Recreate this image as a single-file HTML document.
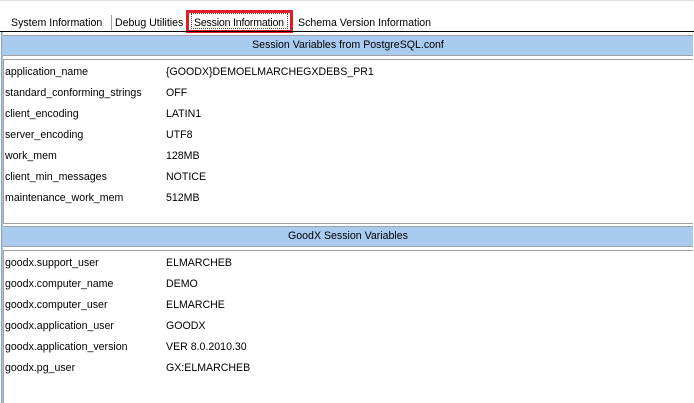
<!DOCTYPE html>
<html><head><style>
body{margin:0;width:694px;height:403px;background:#fff;position:relative;overflow:hidden;font-family:"Liberation Sans",Tahoma,sans-serif;font-size:10.6px;color:#000}
.a{position:absolute;white-space:nowrap}
.tab{top:17px}
.hdr{position:absolute;left:3px;width:690px;height:19px;background:#a9cbf0;border-top:1px solid #a0a0a0;border-bottom:1px solid #a0a0a0;text-align:center;line-height:19px}
.hl{position:absolute;left:3px;width:690px;height:1px;background:#a0a0a0}
</style></head><body>
<div class="a" style="left:0;top:0;width:694px;height:1px;background:#e0e0e0"></div>
<div class="a tab" style="left:11px">System Information</div>
<div class="a" style="left:111px;top:15px;width:1px;height:15px;background:#a0a0a0"></div>
<div class="a tab" style="left:115px">Debug Utilities</div>
<div class="a" style="left:186px;top:10px;width:107px;height:23px;box-sizing:border-box;border:3px solid #e21b24"></div>
<div class="a" style="left:191px;top:13px;width:97px;height:16px;box-sizing:border-box;border:1px dotted #444"></div>
<div class="a tab" style="left:194px;letter-spacing:-0.2px">Session Information</div>
<div class="a tab" style="left:298px">Schema Version Information</div>
<div class="a" style="left:0;top:31px;width:694px;height:1px;background:#000"></div>
<div class="a" style="left:1px;top:32px;width:1px;height:371px;background:#7aa7dd"></div>
<div class="a" style="left:2px;top:32px;width:1px;height:371px;background:#c0c0c0"></div>
<div class="hdr" style="top:35px">Session Variables from PostgreSQL.conf</div>
<div class="hl" style="top:59px"></div>
<div class="a" style="left:3px;top:59px;width:1px;height:165px;background:#a0a0a0"></div>
<div class="hl" style="top:223px"></div>
<div class="hdr" style="top:226px">GoodX Session Variables</div>
<div class="hl" style="top:250px"></div>
<div class="a" style="left:3px;top:250px;width:1px;height:153px;background:#a0a0a0"></div>

<div class="a" style="left:5px;top:62px;line-height:21px">application_name<br>standard_conforming_strings<br>client_encoding<br>server_encoding<br>work_mem<br>client_min_messages<br>maintenance_work_mem</div>
<div class="a" style="left:166px;top:62px;line-height:21px">{GOODX}DEMOELMARCHEGXDEBS_PR1<br>OFF<br>LATIN1<br>UTF8<br>128MB<br>NOTICE<br>512MB</div>
<div class="a" style="left:5px;top:253px;line-height:21px">goodx.support_user<br>goodx.computer_name<br>goodx.computer_user<br>goodx.application_user<br>goodx.application_version<br>goodx.pg_user</div>
<div class="a" style="left:166px;top:253px;line-height:21px">ELMARCHEB<br>DEMO<br>ELMARCHE<br>GOODX<br>VER 8.0.2010.30<br>GX:ELMARCHEB</div>
</body></html>
